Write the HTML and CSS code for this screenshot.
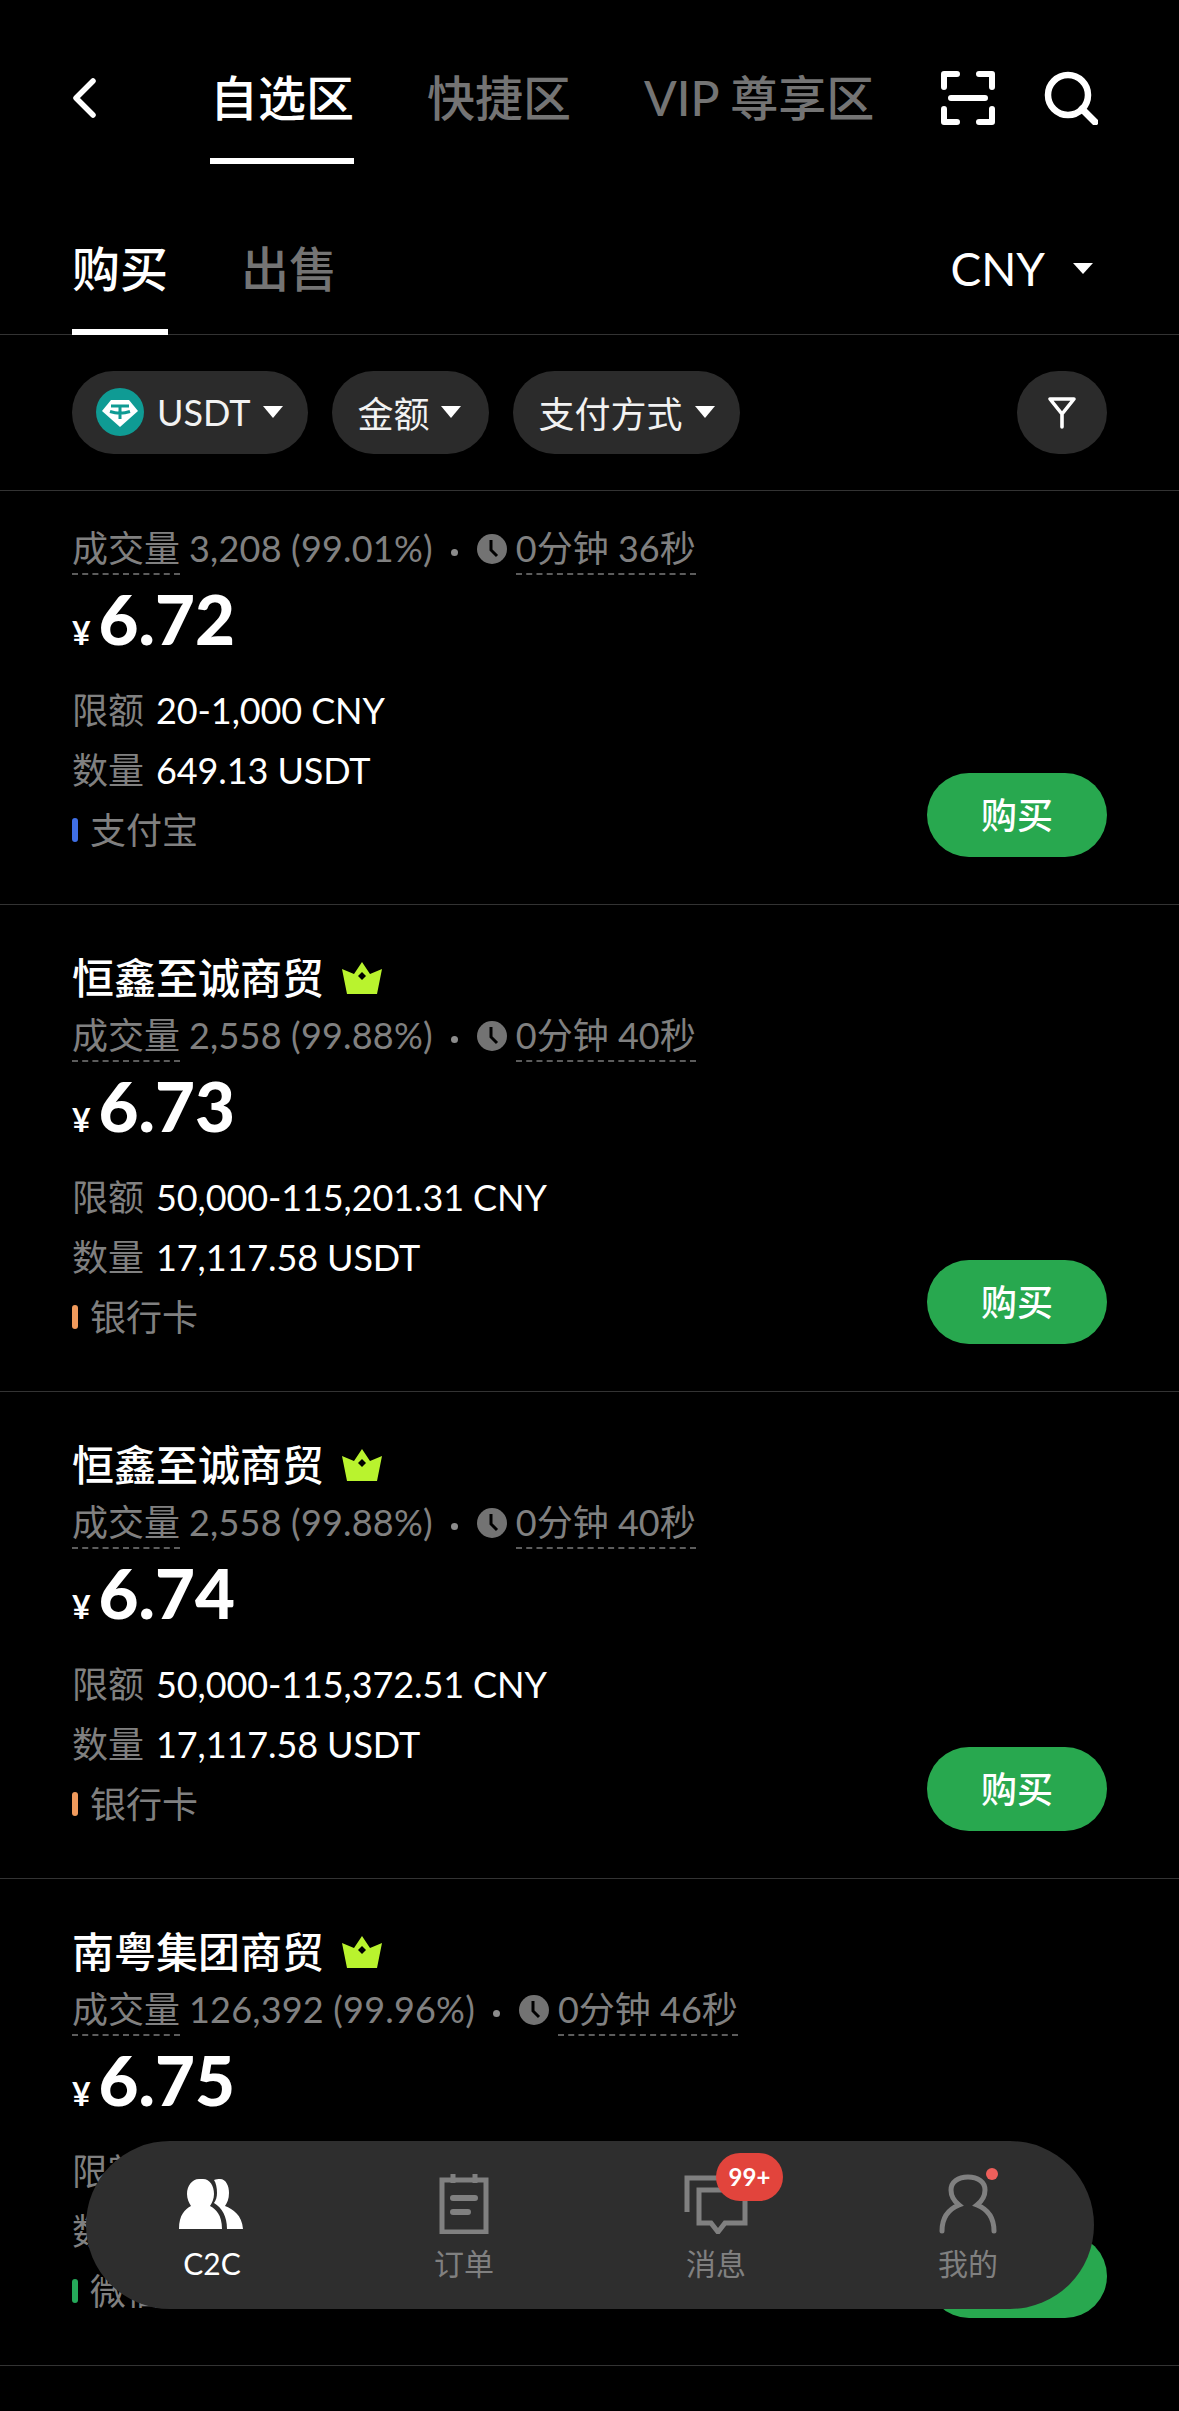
FILE: index.html
```html
<!DOCTYPE html>
<html lang="zh">
<head>
<meta charset="utf-8">
<title>C2C</title>
<link rel="stylesheet" href="styles.css">
</head>
<body>
<div class="page">
  <header class="topbar">
    <svg class="back" viewBox="0 0 24 40"><path d="M21 3 4 20l17 17" fill="none" stroke="#fff" stroke-width="5.5" stroke-linecap="round" stroke-linejoin="round"/></svg>
    <nav class="tabs">
      <span class="tab active">自选区</span>
      <span class="tab">快捷区</span>
      <span class="tab">VIP 尊享区</span>
    </nav>
    <div class="top-icons">
      <svg class="ico" viewBox="0 0 54 54"><path d="M16 3H3v13M38 3h13v13M3 38v13h13M51 38v13H38M10 27h34" fill="none" stroke="#fff" stroke-width="6" stroke-linecap="round" stroke-linejoin="round"/></svg>
      <svg class="ico" viewBox="0 0 54 54"><circle cx="24" cy="24" r="20" fill="none" stroke="#fff" stroke-width="6.5"/><path d="M38 38l13 13" stroke="#fff" stroke-width="7" stroke-linecap="round"/></svg>
    </div>
  </header>

  <section class="subbar">
    <span class="sub active">购买</span>
    <span class="sub">出售</span>
    <span class="currency">CNY<i class="tri"></i></span>
  </section>

  <section class="filters">
    <span class="chip chip-usdt">
      <svg class="coin" viewBox="0 0 48 48"><circle cx="24" cy="24" r="24" fill="#0f9b94"/><path d="M15 12h18l9 11-18 16L6 23z" fill="#fff"/><path d="M15 18h18M24 18v13M14 23.5c6 2 14 2 20 0" fill="none" stroke="#0f9b94" stroke-width="3"/></svg>
      <span>USDT</span><i class="tri small"></i>
    </span>
    <span class="chip chip-amount">金额<i class="tri small"></i></span>
    <span class="chip">支付方式<i class="tri small"></i></span>
    <span class="chip chip-filter">
      <svg viewBox="0 0 30 34" class="funnel"><path d="M3 3h24L15 18zM15 18v13" fill="none" stroke="#fff" stroke-width="3.6" stroke-linejoin="round" stroke-linecap="round"/></svg>
    </span>
  </section>

  <main class="list">
    <article class="row row-cut">
      <div class="info">
        <div class="stats"><span class="dash">成交量</span><span class="num">3,208 (99.01%)</span><b class="dot"></b><svg class="clock" viewBox="0 0 30 30"><circle cx="15" cy="15" r="15" fill="#737373"/><path d="M14 6v10l6 6" fill="none" stroke="#000" stroke-width="3"/></svg><span class="dash">0分钟 36秒</span></div>
        <div class="price"><span class="yen">¥</span>6.72</div>
        <div class="line"><span class="label">限额</span>20-1,000 CNY</div>
        <div class="line"><span class="label">数量</span>649.13 USDT</div>
        <div class="line pay"><i class="bar blue"></i>支付宝</div>
      </div>
      <span class="buy">购买</span>
    </article>

    <article class="row">
      <div class="info">
        <div class="name">恒鑫至诚商贸<svg class="crown" viewBox="0 0 40 32"><path d="M20 0l8 12 12-5-5 25H5L0 7l12 5z" fill="#b9f32e"/><path d="M20 10l4 4-4 4-4-4z" fill="#000"/></svg></div>
        <div class="stats"><span class="dash">成交量</span><span class="num">2,558 (99.88%)</span><b class="dot"></b><svg class="clock" viewBox="0 0 30 30"><circle cx="15" cy="15" r="15" fill="#737373"/><path d="M14 6v10l6 6" fill="none" stroke="#000" stroke-width="3"/></svg><span class="dash">0分钟 40秒</span></div>
        <div class="price"><span class="yen">¥</span>6.73</div>
        <div class="line"><span class="label">限额</span>50,000-115,201.31 CNY</div>
        <div class="line"><span class="label">数量</span>17,117.58 USDT</div>
        <div class="line pay"><i class="bar orange"></i>银行卡</div>
      </div>
      <span class="buy">购买</span>
    </article>

    <article class="row">
      <div class="info">
        <div class="name">恒鑫至诚商贸<svg class="crown" viewBox="0 0 40 32"><path d="M20 0l8 12 12-5-5 25H5L0 7l12 5z" fill="#b9f32e"/><path d="M20 10l4 4-4 4-4-4z" fill="#000"/></svg></div>
        <div class="stats"><span class="dash">成交量</span><span class="num">2,558 (99.88%)</span><b class="dot"></b><svg class="clock" viewBox="0 0 30 30"><circle cx="15" cy="15" r="15" fill="#737373"/><path d="M14 6v10l6 6" fill="none" stroke="#000" stroke-width="3"/></svg><span class="dash">0分钟 40秒</span></div>
        <div class="price"><span class="yen">¥</span>6.74</div>
        <div class="line"><span class="label">限额</span>50,000-115,372.51 CNY</div>
        <div class="line"><span class="label">数量</span>17,117.58 USDT</div>
        <div class="line pay"><i class="bar orange"></i>银行卡</div>
      </div>
      <span class="buy">购买</span>
    </article>

    <article class="row">
      <div class="info">
        <div class="name">南粤集团商贸<svg class="crown" viewBox="0 0 40 32"><path d="M20 0l8 12 12-5-5 25H5L0 7l12 5z" fill="#b9f32e"/><path d="M20 10l4 4-4 4-4-4z" fill="#000"/></svg></div>
        <div class="stats"><span class="dash">成交量</span><span class="num">126,392 (99.96%)</span><b class="dot"></b><svg class="clock" viewBox="0 0 30 30"><circle cx="15" cy="15" r="15" fill="#737373"/><path d="M14 6v10l6 6" fill="none" stroke="#000" stroke-width="3"/></svg><span class="dash">0分钟 46秒</span></div>
        <div class="price"><span class="yen">¥</span>6.75</div>
        <div class="line"><span class="label">限额</span></div>
        <div class="line"><span class="label">数量</span></div>
        <div class="line pay"><i class="bar green"></i>微信</div>
      </div>
      <span class="buy">购买</span>
    </article>
  </main>

  <nav class="bottom">
    <div class="item on">
      <svg class="nav-ico" viewBox="0 0 64 50"><path d="M24 0c7 0 11 7 11 15 0 5-2 9-4 12 6 3 12 9 12 23H0c0-14 6-20 12-23-2-3-4-7-4-12C8 7 13 0 20 0z" fill="#fff"/><path d="M41 0c6 0 9 7 9 14 0 6-2 10-4 13 8 3 17 9 18 23H48c0-13-5-21-13-26 2-3 3-6 3-10 0-5-1-10-3-13 2-1 4-1 6-1z" fill="#fff"/></svg>
      <span>C2C</span>
    </div>
    <div class="item">
      <svg class="nav-ico" viewBox="0 0 64 60"><path d="M10 6h44v52H10z" fill="none" stroke="#808080" stroke-width="5"/><path d="M21 0v9M43 0v9" stroke="#808080" stroke-width="5"/><path d="M21 24h22M21 38h15" stroke="#808080" stroke-width="6" stroke-linecap="round"/></svg>
      <span>订单</span>
    </div>
    <div class="item">
      <svg class="nav-ico" viewBox="0 0 64 60"><path d="M3 38V4h46" fill="none" stroke="#808080" stroke-width="5"/><path d="M15 16h46v33H41l-7 9-7-9H15z" fill="none" stroke="#808080" stroke-width="5"/></svg>
      <span>消息</span>
      <b class="badge">99+</b>
    </div>
    <div class="item">
      <svg class="nav-ico" viewBox="0 0 64 60"><path d="M6 57c0-14 7-22 17-26-5-4-8-9-8-15C15 8 22 3 32 3s17 5 17 13c0 6-3 11-8 15 10 4 17 12 17 26" fill="none" stroke="#808080" stroke-width="5" stroke-linecap="round"/></svg>
      <span>我的</span>
      <b class="red-dot"></b>
    </div>
  </nav>
</div>
</body>
</html>
```

FILE: styles.css
```css
* { box-sizing: border-box; }
html, body { margin: 0; padding: 0; background: #000; }
body { font-family: "Lato", "Noto Sans CJK SC", sans-serif; color: #fff; }
i, b { font-style: normal; font-weight: normal; }
.page { position: relative; width: 1179px; height: 2411px; overflow: hidden; background: #000; }

.topbar { display: flex; height: 164px; padding: 0 81px 0 72px; }
.back { width: 24px; height: 40px; margin: 78px 114px 0 0; flex: none; }
.tabs { display: flex; gap: 73px; }
.tab { height: 164px; padding-top: 66px; font-size: 48px; line-height: 64px; font-weight: 500; color: #747474; border-bottom: 6px solid transparent; white-space: nowrap; }
.tab.active { color: #fff; border-bottom-color: #fff; }
.top-icons { display: flex; gap: 49px; margin-left: auto; padding-top: 71px; }
.ico { width: 54px; height: 54px; display: block; }

.subbar { display: flex; height: 171px; padding: 0 72px; gap: 73px; border-bottom: 1px solid #333; }
.sub { height: 171px; padding-top: 74px; font-size: 48px; line-height: 62px; font-weight: 500; color: #747474; border-bottom: 6px solid transparent; }
.sub.active { color: #fff; border-bottom-color: #fff; }
.currency { margin-left: auto; display: flex; align-items: center; gap: 28px; height: 62px; margin-top: 73px; font-size: 46px; margin-right: 14px; }
.tri { display: inline-block; width: 0; height: 0; border-left: 10px solid transparent; border-right: 10px solid transparent; border-top: 11px solid #fff; }
.tri.small { border-left-width: 10px; border-right-width: 10px; border-top-width: 12px; }

.filters { display: flex; gap: 24px; height: 156px; padding: 36px 72px 0; border-bottom: 1px solid #333; }
.chip { display: flex; align-items: center; gap: 12px; height: 83px; padding: 0 25px 2px; border-radius: 42px; background: #2b2b2b; font-size: 36px; color: #f2f2f2; }
.chip-usdt { padding-left: 24px; gap: 13px; }
.chip-amount { padding-right: 28px; }
.coin { width: 48px; height: 48px; }
.chip-filter { margin-left: auto; width: 90px; padding: 0; justify-content: center; }
.funnel { width: 30px; height: 34px; }

.row { display: flex; justify-content: space-between; height: 487px; padding: 44px 72px 47px; border-bottom: 1px solid #333; }
.row-cut { height: 414px; padding-top: 34px; }
.info { display: flex; flex-direction: column; }
.name { display: flex; align-items: center; gap: 18px; height: 58px; margin-bottom: 5px; font-size: 42px; line-height: 58px; font-weight: 500; }
.crown { width: 40px; height: 32px; }
.stats { display: flex; align-items: flex-start; height: 48px; font-size: 36px; line-height: 46px; color: #808080; white-space: nowrap; }
.dash { height: 50px; border-bottom: 2px dashed #5c5c5c; }
.num { margin-left: 9px; letter-spacing: 0.2px; }
.dot { width: 7px; height: 7px; margin: 24px 19px 0 18px; border-radius: 50%; background: #8c8c8c; }
.clock { width: 30px; height: 30px; margin: 9px 9px 0 0; }
.price { height: 74px; margin: 9px 0 24px; font-size: 69px; line-height: 74px; font-weight: 900; }
.yen { font-size: 32px; font-weight: 700; margin-right: 8px; }
.line { display: flex; height: 60px; font-size: 36px; line-height: 60px; white-space: nowrap; letter-spacing: -0.1px; }
.label { color: #808080; margin-right: 12px; letter-spacing: 0; }
.pay { align-items: center; color: #808080; letter-spacing: 0; }
.bar { width: 6px; height: 24px; margin-right: 12px; border-radius: 3px; }
.blue { background: #3f6fe6; }
.orange { background: #f09a5c; }
.green { background: #25a95a; }
.buy { align-self: flex-end; display: flex; align-items: center; justify-content: center; width: 180px; height: 84px; padding-bottom: 5px; border-radius: 42px; background: #28a84f; font-size: 36px; font-weight: 500; }

.bottom { position: absolute; left: 86px; top: 2141px; display: grid; grid-template-columns: repeat(4, 1fr); width: 1008px; height: 168px; border-radius: 84px; background: #2e2e2e; }
.item { position: relative; display: flex; flex-direction: column; align-items: center; padding-top: 33px; font-size: 30px; line-height: 40px; color: #808080; }
.item.on { color: #fff; }
.item.on .nav-ico { margin-left: -2px; }
.nav-ico { width: 64px; height: 60px; margin-bottom: 9px; }
.badge { position: absolute; left: 126px; top: 12px; width: 67px; height: 48px; border-radius: 24px; background: #e2443c; color: #fff; font-size: 24px; line-height: 48px; font-weight: 700; text-align: center; }
.red-dot { position: absolute; left: 144px; top: 27px; width: 12px; height: 12px; border-radius: 50%; background: #ee5f5b; }
```
